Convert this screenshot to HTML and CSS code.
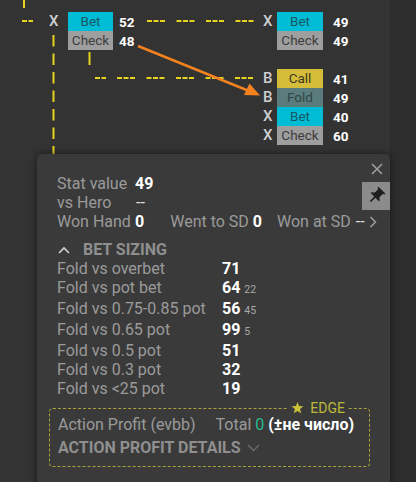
FILE: index.html
```html
<!DOCTYPE html>
<html>
<head>
<meta charset="utf-8">
<link rel="stylesheet" href="styles.css">
</head>
<body>
<div class="screen">
  <div class="tree">
    <svg class="wires" width="390" height="160" viewBox="0 0 390 160">
      <g stroke="#e6d21f" stroke-width="2" fill="none">
        <line x1="24" y1="0" x2="24" y2="8"/>
        <line x1="22" y1="21" x2="33" y2="21" stroke-dasharray="5 1.5"/>
        <line x1="147" y1="21" x2="254" y2="21" stroke-dasharray="5 1.5 5 1.5 5 11.5"/>
        <line x1="53.5" y1="35" x2="53.5" y2="160" stroke-dasharray="11.5 7"/>
        <line x1="89.5" y1="52" x2="89.5" y2="65"/>
        <line x1="95" y1="78" x2="106" y2="78" stroke-dasharray="5 1.5"/>
        <line x1="117" y1="78" x2="254" y2="78" stroke-dasharray="5 1.5 5 1.5 5 11.5"/>
      </g>
      <g>
        <line x1="138" y1="46" x2="249" y2="91" stroke="#f4821e" stroke-width="2.5"/>
        <polygon points="260,95.5 244,95 249.5,83.5" fill="#f4821e"/>
      </g>
    </svg>

    <div class="node n1">
      <div class="row"><span class="lt">X</span><span class="box bet">Bet</span><span class="num">52</span></div>
      <div class="row"><span class="lt"></span><span class="box check">Check</span><span class="num">48</span></div>
    </div>

    <div class="node n2">
      <div class="row"><span class="lt">X</span><span class="box bet">Bet</span><span class="num">49</span></div>
      <div class="row"><span class="lt"></span><span class="box check">Check</span><span class="num">49</span></div>
    </div>

    <div class="node n3">
      <div class="row"><span class="lt">B</span><span class="box call">Call</span><span class="num">41</span></div>
      <div class="row"><span class="lt">B</span><span class="box fold">Fold</span><span class="num">49</span></div>
      <div class="row"><span class="lt">X</span><span class="box bet">Bet</span><span class="num">40</span></div>
      <div class="row"><span class="lt">X</span><span class="box check">Check</span><span class="num">60</span></div>
    </div>
  </div>
  <div class="side"></div>

  <div class="popup">
    <svg class="close" width="12" height="12" viewBox="0 0 12 12">
      <path d="M1 1 L11 11 M11 1 L1 11" stroke="#a0a0a0" stroke-width="1.5"/>
    </svg>
    <div class="pin">
      <svg width="20" height="20" viewBox="0 0 24 24">
        <path transform="rotate(45 12 12)" fill="#1e1e1e" d="M16 9V4h1c.55 0 1-.45 1-1s-.45-1-1-1H7c-.55 0-1 .45-1 1s.45 1 1 1h1v5c0 1.66-1.34 3-3 3v2h5.97v7l1 1 1-1v-7H19v-2c-1.66 0-3-1.34-3-3z"/>
      </svg>
    </div>

    <div class="stats">
      <div class="srow"><span class="slabel">Stat value</span><span class="val">49</span></div>
      <div class="srow"><span class="slabel">vs Hero</span><span class="dash">--</span></div>
      <div class="srow">
        <span class="slabel">Won Hand</span><span class="val">0</span>
        <span class="item i2">Went to SD <span class="val">0</span></span>
        <span class="item i3">Won at SD <span class="dash">--</span></span>
        <svg class="more" width="8" height="12" viewBox="0 0 8 12"><path d="M1.5 1 L6.5 6 L1.5 11" stroke="#a0a0a0" stroke-width="1.5" fill="none"/></svg>
      </div>
    </div>

    <div class="section">
      <svg class="up" width="12" height="8" viewBox="0 0 12 8"><path d="M1 7 L6 2 L11 7" stroke="#d0d0d0" stroke-width="1.6" fill="none"/></svg>
      <span class="stitle">BET SIZING</span>
    </div>

    <div class="sizing">
      <span>Fold vs overbet</span><span><span class="val">71</span></span>
      <span>Fold vs pot bet</span><span><span class="val">64</span><span class="sub">22</span></span>
      <span>Fold vs 0.75-0.85 pot</span><span><span class="val">56</span><span class="sub">45</span></span>
      <span>Fold vs 0.65 pot</span><span><span class="val">99</span><span class="sub">5</span></span>
      <span>Fold vs 0.5 pot</span><span><span class="val">51</span></span>
      <span>Fold vs 0.3 pot</span><span><span class="val">32</span></span>
      <span>Fold vs &lt;25 pot</span><span><span class="val">19</span></span>
    </div>

    <div class="edge">
      <div class="edge-tag">
        <svg width="13" height="12" viewBox="0 0 24 23"><path fill="#c8c23a" d="M12 0l3.1 7.6 8.2.6-6.3 5.3 2 8L12 17.1 5 21.5l2-8L.7 8.2l8.2-.6z"/></svg>
        <span>EDGE</span>
      </div>
      <div class="erow">
        <span>Action Profit (evbb)</span>
        <span class="total">Total <span class="green">0</span> <span class="val">(±не число)</span></span>
      </div>
      <div class="erow">
        <span class="stitle">ACTION PROFIT DETAILS</span>
        <svg class="down" width="13" height="8" viewBox="0 0 13 8"><path d="M1 1 L6.5 6.5 L12 1" stroke="#6a6a6a" stroke-width="1.5" fill="none"/></svg>
      </div>
    </div>
  </div>
</div>
</body>
</html>
```

FILE: styles.css
```css
html, body {
  margin: 0;
  padding: 0;
  background: #333333;
}

.screen {
  position: relative;
  width: 416px;
  height: 482px;
  overflow: hidden;
  display: flex;
  font-family: Roboto, "Liberation Sans", sans-serif;
}

.tree {
  position: relative;
  width: 390px;
  height: 482px;
  background: #333333;
}

.side {
  flex: 1;
  background: #2d2d2d;
}

.wires {
  position: absolute;
  left: 0;
  top: 0;
}

.node {
  position: absolute;
  display: flex;
  flex-direction: column;
}

.n1 { left: 49px; top: 12px; }
.n2 { left: 263px; top: 12px; }
.n3 { left: 263px; top: 69px; }

.row {
  display: flex;
  align-items: center;
  height: 19px;
}

.lt {
  width: 19px;
  color: #cfcfcf;
  font-size: 15px;
  font-weight: 500;
  line-height: 19px;
}

.n2 .lt, .n3 .lt { width: 14px; }

.box {
  width: 45px;
  height: 19px;
  line-height: 19px;
  text-align: center;
  font-size: 13.5px;
}

.n2 .box, .n3 .box { width: 46px; }

.bet { background: #00bcd4; color: #175865; }
.check { background: #9e9e9e; color: #3d3d3d; }
.call { background: #d5bd39; color: #3d3822; }
.fold { background: #5b7c7c; color: #2e4646; }

.num {
  margin-left: 6px;
  color: #ffffff;
  font-size: 13.5px;
  font-weight: 700;
}

.n2 .num, .n3 .num { margin-left: 10px; }

.popup {
  position: absolute;
  left: 37px;
  top: 154px;
  width: 353px;
  height: 340px;
  box-sizing: border-box;
  padding: 20px 0 0 12px;
  background: #3a3a3a;
  border-radius: 5px;
  box-shadow: 0 0 6px rgba(0, 0, 0, 0.55);
  color: #9a9a9a;
  font-size: 16px;
  line-height: 19px;
}

.close {
  position: absolute;
  left: 334px;
  top: 9px;
}

.pin {
  position: absolute;
  left: 325px;
  top: 28px;
  width: 28px;
  height: 28px;
  background: #8b8b8b;
  display: flex;
  align-items: center;
  justify-content: center;
}

.stats {
  padding-left: 8px;
}

.srow {
  display: flex;
  align-items: center;
  white-space: nowrap;
}

.slabel {
  width: 78px;
}

.val {
  color: #ffffff;
  font-weight: 700;
}

.dash {
  color: #e0e0e0;
  padding-left: 1px;
}

.i2 { margin-left: 26px; }
.i3 { margin-left: 15px; }

.more {
  margin-left: 4px;
}

.section {
  display: flex;
  align-items: center;
  margin-top: 9px;
  padding-left: 9px;
}

.up {
  margin-right: 13px;
}

.stitle {
  font-weight: 700;
  color: #8f8f8f;
}

.sizing {
  display: grid;
  grid-template-columns: 165px auto;
  padding-left: 8px;
}

.sub {
  margin-left: 4px;
  font-size: 10.5px;
  color: #a8a8a8;
}

.edge {
  position: relative;
  width: 321px;
  box-sizing: border-box;
  margin-top: 10px;
  padding: 6px 8px 9px 8px;
  border: 1px dashed #a8a33a;
  border-radius: 4px;
}

.edge-tag {
  position: absolute;
  right: 21px;
  top: -9px;
  display: flex;
  align-items: center;
  gap: 6px;
  padding: 0 3px;
  background: #3a3a3a;
  color: #bdb83a;
  font-size: 14px;
  line-height: 16px;
}

.erow {
  display: flex;
  align-items: center;
  white-space: nowrap;
}

.erow + .erow {
  margin-top: 4px;
}

.total {
  margin-left: 20px;
}

.green {
  color: #2bb88a;
}

.down {
  margin-left: 6px;
}
```
